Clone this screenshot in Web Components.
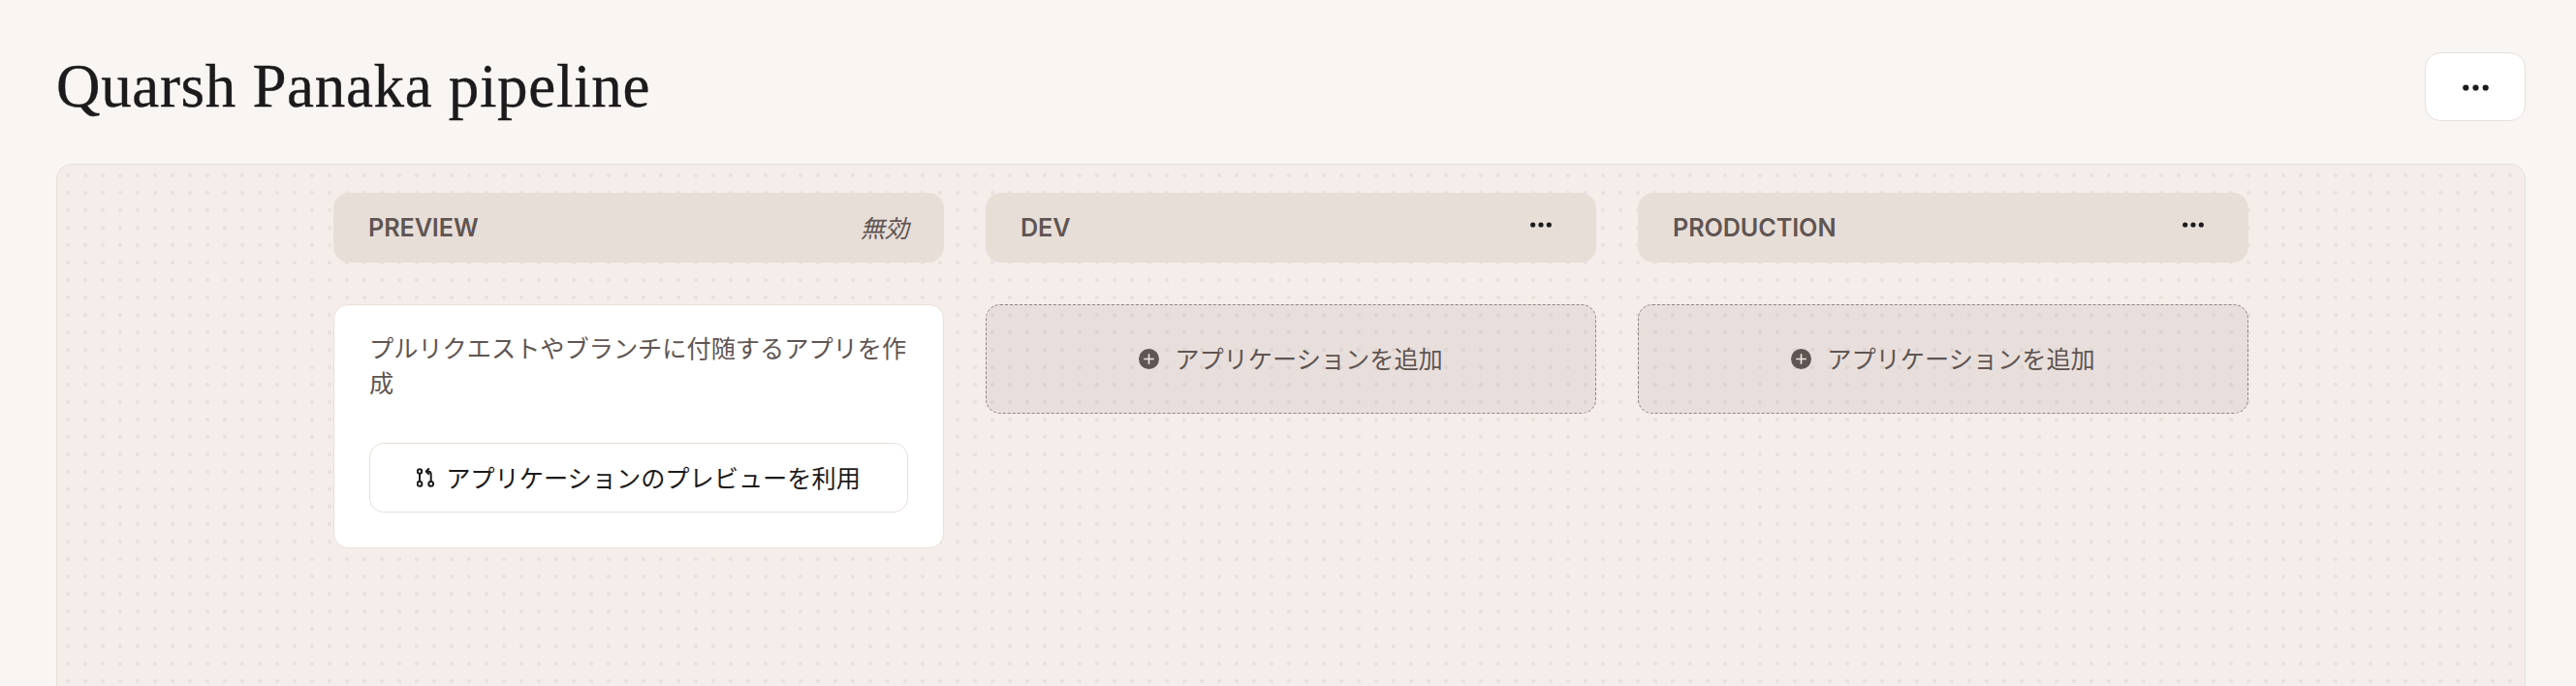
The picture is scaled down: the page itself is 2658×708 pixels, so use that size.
<!DOCTYPE html>
<html lang="ja">
<head>
<meta charset="utf-8">
<title>Quarsh Panaka pipeline</title>
<style>
html,body{margin:0;height:708px;overflow:hidden;background:#f8f5f2}
body{font-family:Inter,"Noto Sans CJK JP",sans-serif;font-size:25.2px;color:#5f5552}
</style>
</head>
<body>
<template id="t-page">
<style>
:host{display:flex;flex-direction:column;box-sizing:border-box;padding:54px 52px 0 58px}
header{display:flex;justify-content:space-between;align-items:center;height:71px}
h1{margin:0;font:400 63px/71px "Liberation Serif",serif;color:#1c1a1a;letter-spacing:.67px;-webkit-text-stroke:.35px #1c1a1a}
</style>
<header><h1><slot name="title"></slot></h1><slot name="actions"></slot></header>
<slot></slot>
</template>

<template id="t-menu-button">
<style>
:host{display:flex;align-items:center;justify-content:center;box-sizing:border-box;width:104px;height:71px;padding-top:1px;background:#fff;border:1.5px solid #e8dfd9;border-radius:16px;color:#1c1a1a}
svg{display:block;width:27px;height:7px}
</style>
<svg viewBox="0 0 27 7" aria-hidden="true"><circle cx="3.3" cy="3.5" r="3.1" fill="currentColor"/><circle cx="13.5" cy="3.5" r="3.1" fill="currentColor"/><circle cx="23.7" cy="3.5" r="3.1" fill="currentColor"/></svg>
</template>

<template id="t-canvas">
<style>
:host{display:flex;gap:43px;box-sizing:border-box;margin-top:44px;height:640px;padding:29px 0 0 285px;
border:1.5px solid #e7dfd9;border-radius:16px;background-color:#f5edea;
background-image:radial-gradient(circle,#e9e1dd 1.9px,transparent 2.4px);background-size:18px 18px;background-position:2px 2px}
</style>
<slot></slot>
</template>

<template id="t-column">
<style>
:host{display:flex;flex-direction:column;gap:43px;width:630px;flex:none}
</style>
<slot></slot>
</template>

<template id="t-stage-header">
<style>
:host{display:flex;align-items:center;justify-content:space-between;box-sizing:border-box;height:72px;padding:0 36px;background:#e8ded8;border-radius:16px;color:#5f5552;font-weight:600;font-size:25.2px;letter-spacing:-.1px}
</style>
<slot></slot><slot name="end"></slot>
</template>

<template id="t-stage-menu">
<style>
:host{display:block;margin:-7px 10px 0 0;color:#1c1a1a;line-height:0}
svg{display:block;width:22px;height:6px}
</style>
<svg viewBox="0 0 22 6" aria-hidden="true"><circle cx="2.7" cy="3" r="2.6" fill="currentColor"/><circle cx="11" cy="3" r="2.6" fill="currentColor"/><circle cx="19.3" cy="3" r="2.6" fill="currentColor"/></svg>
</template>

<template id="t-preview-card">
<style>
:host{display:flex;flex-direction:column;box-sizing:border-box;height:252px;padding:27px 36px 36px;background:#fff;border:1.5px solid #e8dfd9;border-radius:15px}
p{margin:0;font-size:25.2px;line-height:36px;color:#5f5552;flex:1}
</style>
<p><slot name="text"></slot></p>
<slot></slot>
</template>

<template id="t-preview-button">
<style>
:host{display:flex;align-items:center;justify-content:center;gap:12px;box-sizing:border-box;height:72px;background:#fff;border:1.5px solid #e8dfd9;border-radius:15px;color:#1c1a1a;font-size:25.2px}
svg{display:block;width:18px;height:20px;flex:none}
span{position:relative;top:-1px}
</style>
<svg viewBox="0 0 18 20" fill="none" stroke="currentColor" stroke-width="2" stroke-linecap="round" stroke-linejoin="round" aria-hidden="true">
<circle cx="3" cy="3.5" r="2.2"/><path d="M3 5.7V14"/><circle cx="3" cy="16.4" r="2.4"/>
<circle cx="14.7" cy="16.4" r="2.4"/><path d="M14.7 14V6.5Q14.7 3.5 11.7 3.5H10"/><path d="M12.2 1 9.8 3.5 12.2 6"/>
</svg>
<span><slot></slot></span>
</template>

<template id="t-add-tile">
<style>
:host{display:flex;align-items:center;justify-content:center;gap:16px;box-sizing:border-box;height:113px;background:rgba(100,85,80,.085);border:1.5px dashed #8f8785;border-radius:15px;color:#5f5552;font-size:25.2px}
svg{display:block;width:21px;height:21px;flex:none}
span{position:relative;top:-2px}
</style>
<svg viewBox="0 0 21 21" aria-hidden="true"><circle cx="10.5" cy="10.5" r="10.5" fill="#5f5552"/><path d="M10.5 5.2V15.8M5.2 10.5H15.8" stroke="#f0e8e5" stroke-width="1.6" fill="none"/></svg>
<span><slot></slot></span>
</template>

<pipeline-page>
  <span slot="title">Quarsh Panaka pipeline</span>
  <menu-button slot="actions"></menu-button>
  <pipeline-canvas>
    <stage-column>
      <stage-header>PREVIEW<em slot="end" style="font-weight:400;letter-spacing:0;position:relative;top:-1px">無効</em></stage-header>
      <preview-card>
        <span slot="text">プルリクエストやブランチに付随するアプリを作成</span>
        <preview-button>アプリケーションのプレビューを利用</preview-button>
      </preview-card>
    </stage-column>
    <stage-column>
      <stage-header>DEV<stage-menu slot="end"></stage-menu></stage-header>
      <add-tile>アプリケーションを追加</add-tile>
    </stage-column>
    <stage-column>
      <stage-header>PRODUCTION<stage-menu slot="end"></stage-menu></stage-header>
      <add-tile>アプリケーションを追加</add-tile>
    </stage-column>
  </pipeline-canvas>
</pipeline-page>

<script>
const defs={ 'pipeline-page':'t-page','menu-button':'t-menu-button','pipeline-canvas':'t-canvas','stage-column':'t-column','stage-header':'t-stage-header','stage-menu':'t-stage-menu','preview-card':'t-preview-card','preview-button':'t-preview-button','add-tile':'t-add-tile'};
for(const [name,id] of Object.entries(defs)){
  customElements.define(name,class extends HTMLElement{
    constructor(){super();this.attachShadow({mode:'open'}).appendChild(document.getElementById(id).content.cloneNode(true));}
  });
}
</script>
</body>
</html>
